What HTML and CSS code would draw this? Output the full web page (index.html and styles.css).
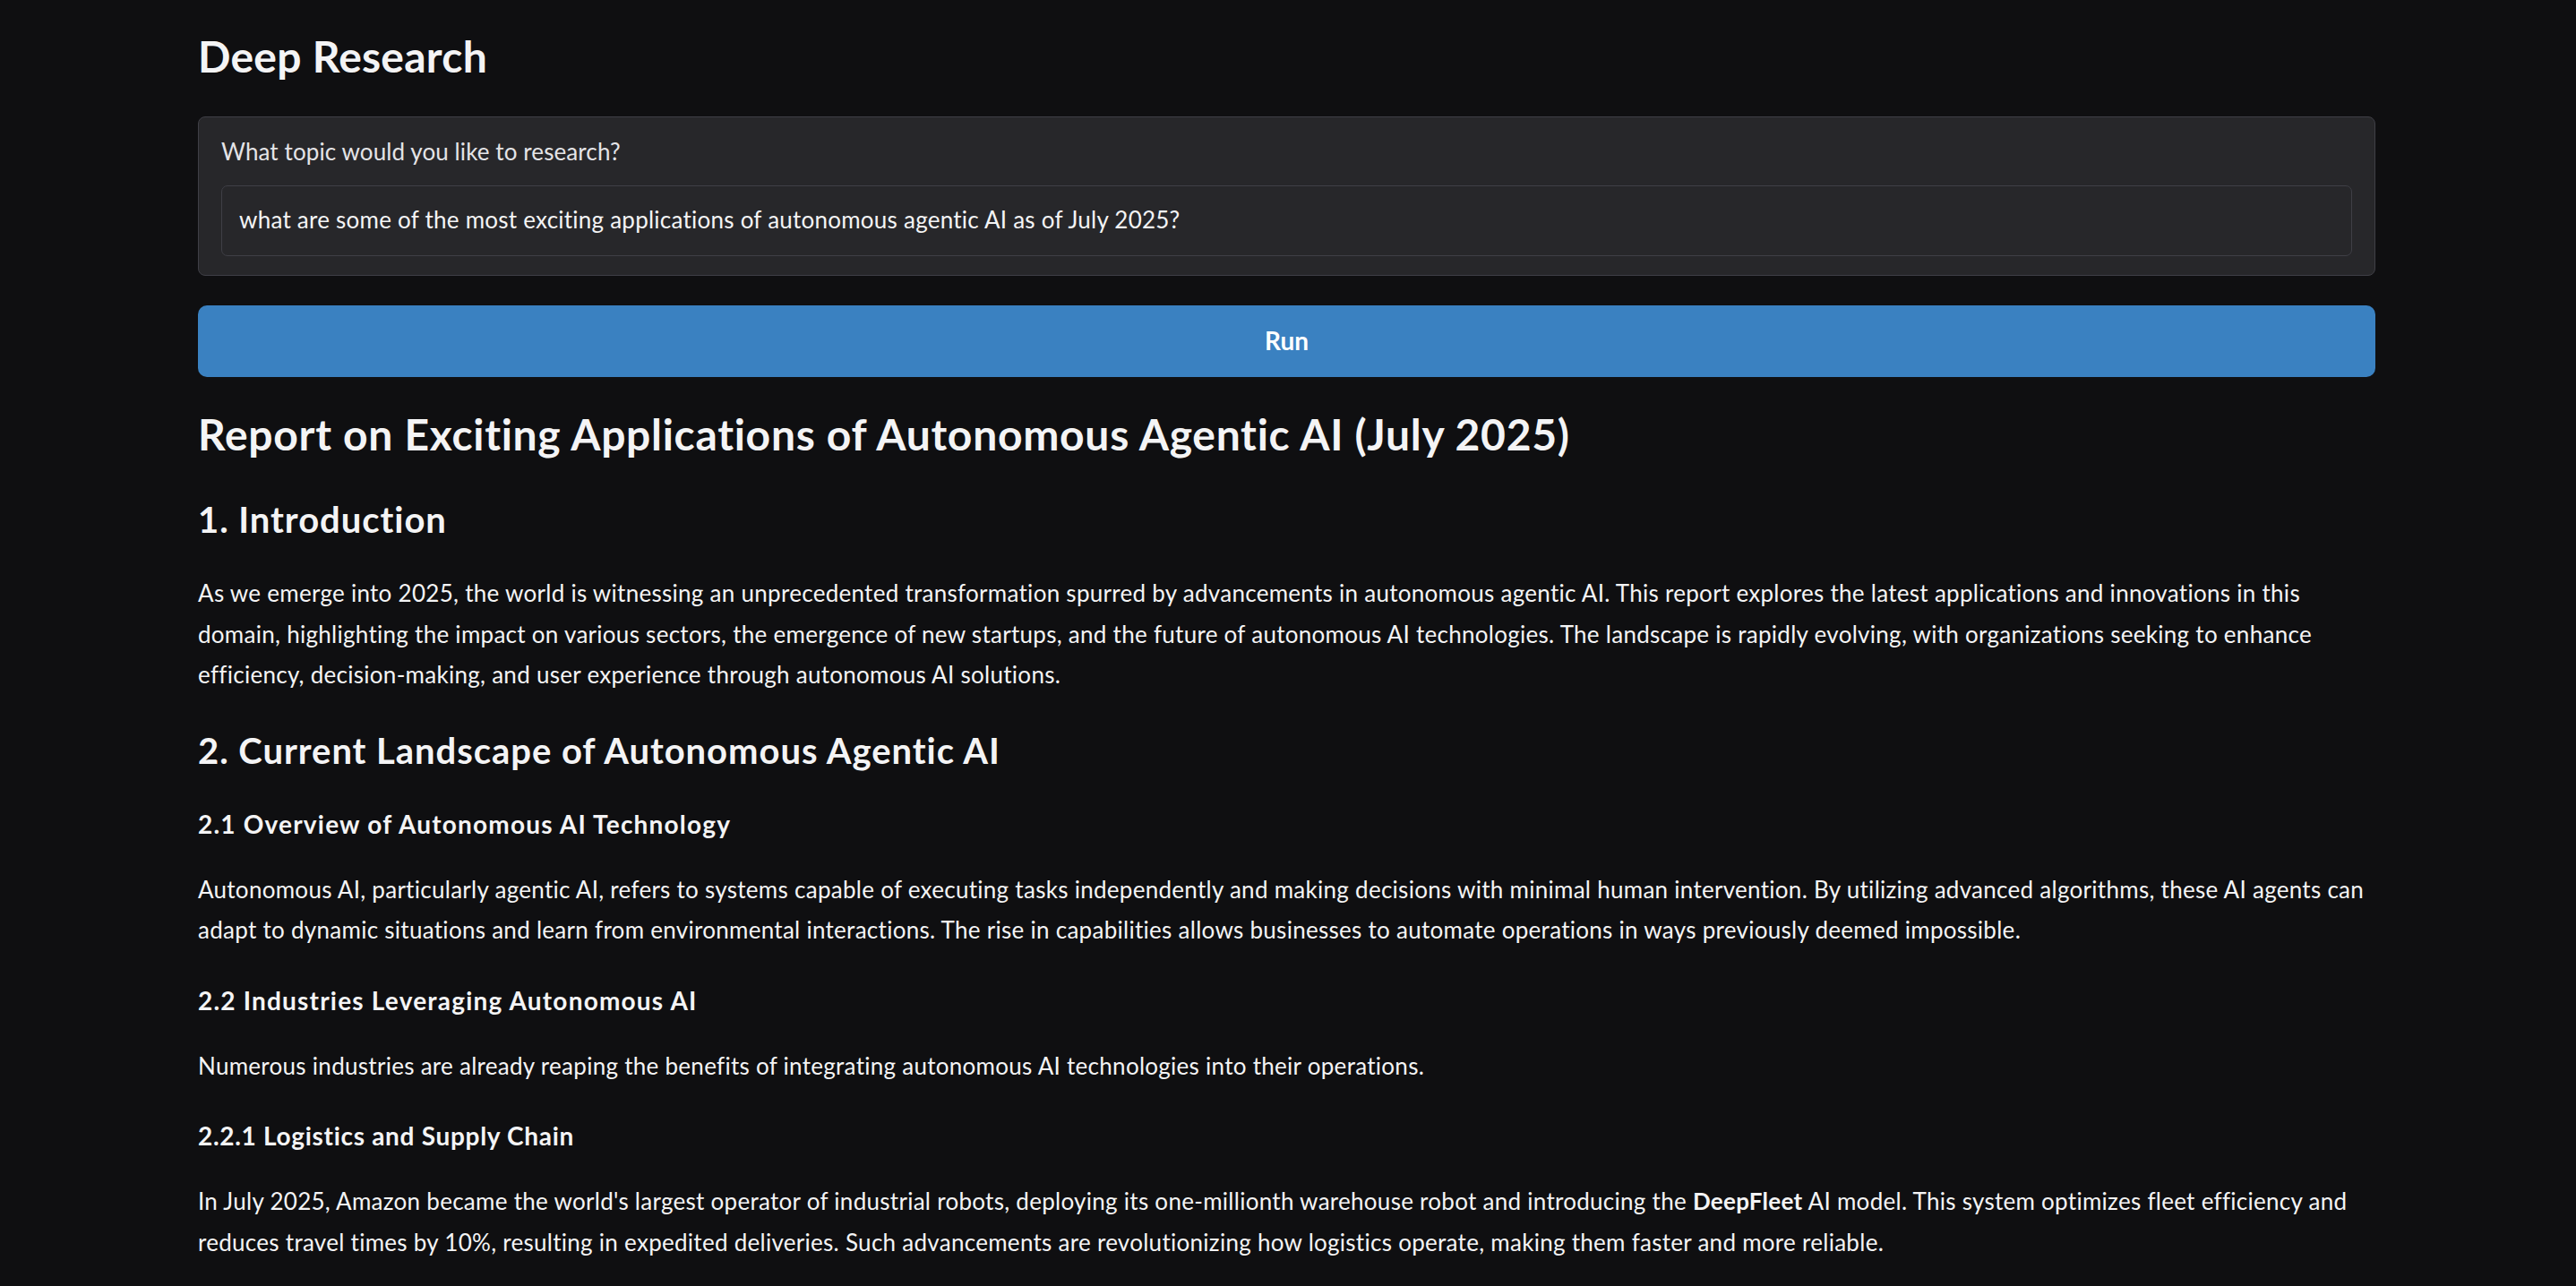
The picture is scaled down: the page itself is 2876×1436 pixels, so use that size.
FILE: index.html
```html
<!DOCTYPE html>
<html lang="en">
<head>
<meta charset="utf-8">
<title>Deep Research</title>
<link rel="stylesheet" href="styles.css">
</head>
<body>
<main class="app">
  <h1 class="app-title">Deep Research</h1>

  <section class="block">
    <label class="block-label" for="topic">What topic would you like to research?</label>
    <input class="text-input" id="topic" type="text" value="what are some of the most exciting applications of autonomous agentic AI as of July 2025?">
  </section>

  <button class="run-btn" type="button">Run</button>

  <article class="report">
    <h1 class="r-h1">Report on Exciting Applications of Autonomous Agentic AI (July 2025)</h1>
    <h2 class="r-h2 first">1. Introduction</h2>
    <p class="r-p after-h2">As we emerge into 2025, the world is witnessing an unprecedented transformation spurred by advancements in autonomous agentic AI. This report explores the latest applications and innovations in this domain, highlighting the impact on various sectors, the emergence of new startups, and the future of autonomous AI technologies. The landscape is rapidly evolving, with organizations seeking to enhance efficiency, decision-making, and user experience through autonomous AI solutions.</p>
    <h2 class="r-h2">2. Current Landscape of Autonomous Agentic AI</h2>
    <h3 class="r-h3 after-h2-h">2.1 Overview of Autonomous AI Technology</h3>
    <p class="r-p after-h3">Autonomous AI, particularly agentic AI, refers to systems capable of executing tasks independently and making decisions with minimal human intervention. By utilizing advanced algorithms, these AI agents can adapt to dynamic situations and learn from environmental interactions. The rise in capabilities allows businesses to automate operations in ways previously deemed impossible.</p>
    <h3 class="r-h3">2.2 Industries Leveraging Autonomous AI</h3>
    <p class="r-p after-h3">Numerous industries are already reaping the benefits of integrating autonomous AI technologies into their operations.</p>
    <h4 class="r-h4">2.2.1 Logistics and Supply Chain</h4>
    <p class="r-p after-h3">In July 2025, Amazon became the world's largest operator of industrial robots, deploying its one-millionth warehouse robot and introducing the <strong>DeepFleet</strong> AI model. This system optimizes fleet efficiency and reduces travel times by 10%, resulting in expedited deliveries. Such advancements are revolutionizing how logistics operate, making them faster and more reliable.</p>
  </article>
</main>
</body>
</html>
```
FILE: styles.css
```css
* { box-sizing: border-box; }

html, body {
  margin: 0;
  padding: 0;
  background: #0f0f11;
}

body {
  font-family: "Lato", "Noto Sans", sans-serif;
  color: #f4f4f5;
}

.app {
  width: 2431px;
  margin: 0 0 0 221px;
  padding-top: 34px;
  display: flex;
  flex-direction: column;
}

.app-title {
  margin: 0;
  font-size: 48px;
  line-height: 58px;
  font-weight: 700;
  letter-spacing: 0.25px;
  color: #f4f4f5;
}

.block {
  margin-top: 38px;
  background: #27272a;
  border: 1px solid #3f3f46;
  border-radius: 8px;
  padding: 21px 25px 21px 25px;
  display: flex;
  flex-direction: column;
  gap: 20px;
}

.block-label {
  font-size: 26px;
  line-height: 35px;
  letter-spacing: 0.1px;
  color: #e4e4e7;
}

.text-input {
  display: block;
  width: 100%;
  height: 79px;
  padding: 0 19px 3px 19px;
  background: #27272a;
  border: 1px solid #3f3f46;
  border-radius: 7px;
  font-family: "Lato", "Noto Sans", sans-serif;
  font-size: 26px;
  letter-spacing: 0.24px;
  color: #f4f4f5;
  outline: none;
}

.run-btn {
  margin-top: 33px;
  height: 80px;
  width: 100%;
  border: none;
  border-radius: 10px;
  background: #3a81c1;
  color: #ffffff;
  font-family: "Lato", "Noto Sans", sans-serif;
  font-size: 28px;
  font-weight: 700;
  display: flex;
  align-items: center;
  justify-content: center;
  padding: 0 0 2px 0;
}

.report {
  display: flex;
  flex-direction: column;
}

.r-h1, .r-h2, .r-h3, .r-h4, .r-p {
  margin: 0;
}

.r-h1 {
  margin-top: 35px;
  font-size: 48px;
  line-height: 58px;
  font-weight: 700;
  letter-spacing: 0.7px;
}

.r-h2 {
  margin-top: 37px;
  font-size: 40px;
  line-height: 48px;
  font-weight: 700;
  letter-spacing: 0.95px;
}

.r-h2.first {
  margin-top: 42px;
}

.r-h3, .r-h4 {
  margin-top: 35px;
  font-size: 28px;
  line-height: 40px;
  font-weight: 700;
}

.r-h3 {
  letter-spacing: 1.2px;
}

.r-h4 {
  letter-spacing: 0.7px;
}

.r-h3.after-h2-h {
  margin-top: 38px;
}

.r-p {
  font-size: 26px;
  line-height: 45.5px;
  letter-spacing: 0.28px;
}

.r-p.after-h2 {
  margin-top: 36px;
}

.r-p.after-h3 {
  margin-top: 31px;
}

.r-p strong {
  font-weight: 700;
}
```
